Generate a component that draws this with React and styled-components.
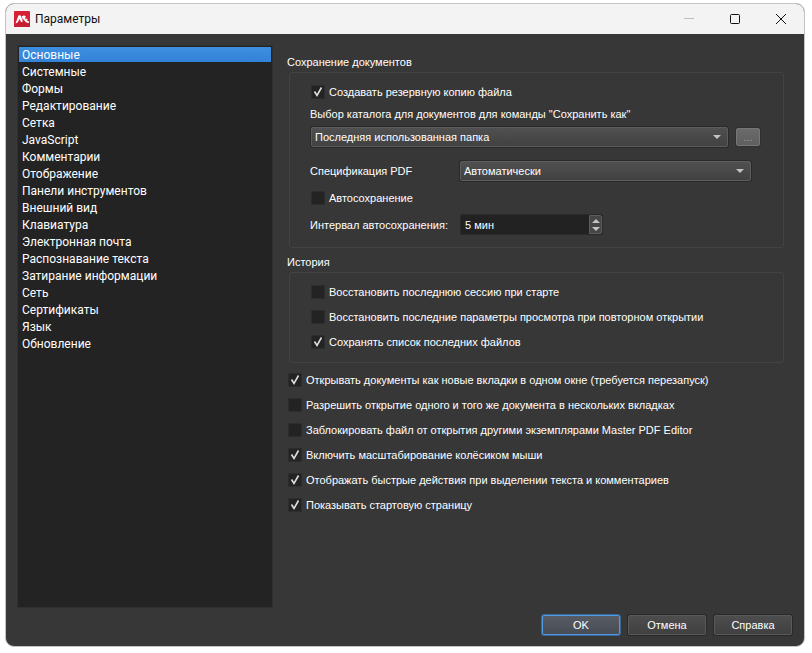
import React, { useState } from "react";
import styled, { createGlobalStyle } from "styled-components";

const GlobalStyle = createGlobalStyle`
  * { box-sizing: border-box; }
  body { margin: 0; background: #fff; }
  button, input, select { font: inherit; color: inherit; }
`;

const Window = styled.div`
  display: flex;
  flex-direction: column;
  min-height: calc(100vh - 9px);
  margin: 3px 7px 6px 5px;
  border: 1px solid #c3c3c3;
  border-radius: 9px;
  overflow: hidden;
  background: #373737;
  color: #fff;
  font: 11px/16px "Liberation Sans", Tahoma, sans-serif;
`;

const TitleBar = styled.header`
  display: flex;
  align-items: center;
  height: 30px;
  padding-left: 8px;
  background: #f3f3f3;
  color: #111;
`;

const Title = styled.h1`
  flex: 1;
  margin: 0 0 0 5px;
  font: 400 12px/16px Roboto, sans-serif;
`;

const WindowButton = styled.button`
  display: grid;
  place-items: center;
  width: 46px;
  height: 30px;
  padding: 0;
  border: 0;
  background: none;
  color: ${(p) => (p.disabled ? "#bdbdbd" : "#111")};
`;

const Body = styled.div`
  flex: 1;
  display: flex;
  gap: 14px;
  padding: 11px 20px 0 11px;
`;

const Sections = styled.ul`
  flex: none;
  width: 256px;
  margin: 0;
  padding: 1px;
  border: 1px solid #303030;
  background: #232323;
  list-style: none;
`;

const Section = styled.li`
  margin-bottom: 2px;
`;

const SectionButton = styled.button`
  display: block;
  width: 100%;
  height: 15px;
  padding: 2px 3px 0;
  border: 0;
  background: ${(p) => (p.$active ? "linear-gradient(#3d8fe0, #3282d8)" : "none")};
  font: 12px/13px Roboto, sans-serif;
  text-align: left;
`;

const Panel = styled.main`
  flex: 1;
  min-width: 0;
  padding-top: 7px;
`;

const Group = styled.fieldset`
  min-width: 0;
  margin: 0 0 4px;
  padding: 0;
  border: 0;
`;

const GroupTitle = styled.legend`
  padding: 0;
  line-height: 20px;
`;

const GroupBox = styled.div`
  margin-left: 2px;
  padding: 6px 23px 8px 20px;
  border: 1px solid #434343;
  border-radius: 3px;
`;

const CheckRow = styled.label`
  display: flex;
  align-items: center;
  gap: 4px;
  height: 25px;
  padding-left: 1px;
`;

const CheckCell = styled.span`
  display: grid;
  width: 14px;
  height: 14px;
  > * { grid-area: 1 / 1; }
`;

const CheckInput = styled.input`
  appearance: none;
  width: 14px;
  height: 14px;
  margin: 0;
  border: 1px solid #2d2d2d;
  background: #232323;
  & + svg { visibility: hidden; pointer-events: none; }
  &:checked + svg { visibility: visible; }
`;

const FieldLabel = styled.label`
  display: block;
  line-height: 20px;
`;

const FolderRow = styled.div`
  display: flex;
  align-items: center;
  gap: 8px;
  margin: 3px 0 14px 1px;
`;

const FieldRow = styled.div`
  display: grid;
  grid-template-columns: 150px minmax(0, 1fr);
  align-items: center;
  margin: 4px 0;
`;

const SelectFrame = styled.div`
  display: grid;
  flex: 1;
  align-items: center;
  max-width: ${(p) => (p.$short ? "291px" : "none")};
  > * { grid-area: 1 / 1; }
  > svg { justify-self: end; margin-right: 7px; pointer-events: none; }
`;

const Select = styled.select`
  appearance: none;
  width: 100%;
  height: 20px;
  padding: 0 20px 0 3px;
  border: 1px solid #5c5c5c;
  border-radius: 2px;
  background: linear-gradient(#505050, #414141);
  box-shadow: 0 0 0 1px #2a2a2a;
`;

const BrowseButton = styled.button`
  width: 24px;
  height: 18px;
  padding: 0;
  border: 1px solid #777;
  border-radius: 2px;
  background: linear-gradient(#6b6b6b, #5f5f5f);
  box-shadow: 0 0 0 1px #303030;
  color: #999;
  line-height: 16px;
`;

const Spinner = styled.div`
  display: flex;
  width: 143px;
  height: 21px;
  border: 1px solid #2a2a2a;
  border-radius: 2px;
  background: #222;
`;

const SpinInput = styled.input`
  flex: 1;
  min-width: 0;
  padding: 0 4px;
  border: 0;
  background: none;
`;

const SpinButtons = styled.div`
  display: flex;
  flex-direction: column;
  justify-content: center;
  gap: 2px;
  width: 13px;
  border: 1px solid #5c5c5c;
  border-radius: 0 2px 2px 0;
  background: #464646;
`;

const SpinButton = styled.button`
  display: grid;
  place-items: center;
  height: 6px;
  padding: 0;
  border: 0;
  background: none;
`;

const Footer = styled.footer`
  display: flex;
  justify-content: flex-end;
  gap: 8px;
  padding: 7px 12px 11px;
`;

const DialogButton = styled.button`
  width: 78px;
  height: 20px;
  padding: 0;
  border: 1px solid ${(p) => (p.$primary ? "#4f9be6" : "#5a5a5a")};
  border-radius: 2px;
  background: ${(p) => (p.$primary ? "linear-gradient(#565b64, #484d55)" : "linear-gradient(#4d4d4d, #404040)")};
  box-shadow: 0 0 0 1px ${(p) => (p.$primary ? "#3c6690" : "#292929")};
`;

const sections = [
  "Основные", "Системные", "Формы", "Редактирование", "Сетка", "JavaScript",
  "Комментарии", "Отображение", "Панели инструментов", "Внешний вид",
  "Клавиатура", "Электронная почта", "Распознавание текста",
  "Затирание информации", "Сеть", "Сертификаты", "Язык", "Обновление",
];

const historyOptions = [
  ["Восстановить последнюю сессию при старте", false],
  ["Восстановить последние параметры просмотра при повторном открытии", false],
  ["Сохранять список последних файлов", true],
];

const generalOptions = [
  ["Открывать документы как новые вкладки в одном окне (требуется перезапуск)", true],
  ["Разрешить открытие одного и того же документа в нескольких вкладках", false],
  ["Заблокировать файл от открытия другими экземплярами Master PDF Editor", false],
  ["Включить масштабирование колёсиком мыши", true],
  ["Отображать быстрые действия при выделении текста и комментариев", true],
  ["Показывать стартовую страницу", true],
];

function Logo() {
  return (
    <svg width="16" height="16" viewBox="0 0 16 16" aria-hidden="true">
      <rect width="16" height="16" rx="1" fill="#d71f35" />
      <path d="M0 15V12L16 9V15Q16 16 15 16H1Q0 16 0 15Z" fill="#c41f32" />
      <path d="M1.5 12.5 4.4 4.6Q5.8 3.6 7 4.8L8.8 10.6 7.2 11.2 5.6 8 3.6 11.6Z" fill="#fff" />
      <path d="M7.8 5.6Q9.6 3.6 11.8 5L11 7.4Q12.8 10 15.2 10.4L14.8 12Q11 12 9.8 8L9 9.2Z" fill="#fff" />
      <path d="M12 7.2 14 9 13 9.6 11.6 8Z" fill="#fff" />
    </svg>
  );
}

function Check({ label, checked = false }) {
  return (
    <CheckRow>
      <CheckCell>
        <CheckInput type="checkbox" defaultChecked={checked} />
        <svg width="14" height="14" viewBox="0 0 14 14" aria-hidden="true">
          <path d="M3.5 6.5 6 10.5 10.5 2.5" fill="none" stroke="#ddd" strokeWidth="1.6" />
        </svg>
      </CheckCell>
      {label}
    </CheckRow>
  );
}

function Arrow({ up }) {
  return (
    <svg width="8" height="4" viewBox="0 0 8 4" aria-hidden="true">
      <path d={up ? "M0 4 4 0 8 4Z" : "M0 0 4 4 8 0Z"} fill="#c4c4c4" />
    </svg>
  );
}

export default function App() {
  const [active, setActive] = useState(sections[0]);
  const [minutes, setMinutes] = useState(5);

  return (
    <>
      <GlobalStyle />
      <Window>
        <TitleBar>
          <Logo />
          <Title>Параметры</Title>
          <WindowButton disabled aria-label="Свернуть">
            <svg width="10" height="10"><path d="M0 4.5H10" stroke="currentColor" /></svg>
          </WindowButton>
          <WindowButton aria-label="Развернуть">
            <svg width="10" height="10"><rect x=".5" y=".5" width="9" height="9" rx="1" fill="none" stroke="currentColor" /></svg>
          </WindowButton>
          <WindowButton aria-label="Закрыть">
            <svg width="10" height="10"><path d="M0 0 10 10M10 0 0 10" stroke="currentColor" /></svg>
          </WindowButton>
        </TitleBar>
        <Body>
          <Sections>
            {sections.map((name) => (
              <Section key={name}>
                <SectionButton $active={name === active} onClick={() => setActive(name)}>{name}</SectionButton>
              </Section>
            ))}
          </Sections>
          <Panel>
            <Group>
              <GroupTitle>Сохранение документов</GroupTitle>
              <GroupBox>
                <Check label="Создавать резервную копию файла" checked />
                <FieldLabel htmlFor="folder">Выбор каталога для документов для команды "Сохранить как"</FieldLabel>
                <FolderRow>
                  <SelectFrame>
                    <Select id="folder"><option>Последняя использованная папка</option></Select>
                    <Arrow />
                  </SelectFrame>
                  <BrowseButton disabled aria-label="Выбрать папку">...</BrowseButton>
                </FolderRow>
                <FieldRow>
                  <FieldLabel htmlFor="spec">Спецификация PDF</FieldLabel>
                  <SelectFrame $short>
                    <Select id="spec"><option>Автоматически</option></Select>
                    <Arrow />
                  </SelectFrame>
                </FieldRow>
                <Check label="Автосохранение" />
                <FieldRow>
                  <FieldLabel htmlFor="interval">Интервал автосохранения:</FieldLabel>
                  <Spinner>
                    <SpinInput id="interval" value={`${minutes} мин`} readOnly />
                    <SpinButtons>
                      <SpinButton aria-label="Больше" onClick={() => setMinutes(minutes + 1)}><Arrow up /></SpinButton>
                      <SpinButton aria-label="Меньше" onClick={() => setMinutes(Math.max(1, minutes - 1))}><Arrow /></SpinButton>
                    </SpinButtons>
                  </Spinner>
                </FieldRow>
              </GroupBox>
            </Group>
            <Group>
              <GroupTitle>История</GroupTitle>
              <GroupBox>
                {historyOptions.map(([label, on]) => <Check key={label} label={label} checked={on} />)}
              </GroupBox>
            </Group>
            {generalOptions.map(([label, on]) => <Check key={label} label={label} checked={on} />)}
          </Panel>
        </Body>
        <Footer>
          <DialogButton $primary>OK</DialogButton>
          <DialogButton>Отмена</DialogButton>
          <DialogButton>Справка</DialogButton>
        </Footer>
      </Window>
    </>
  );
}
